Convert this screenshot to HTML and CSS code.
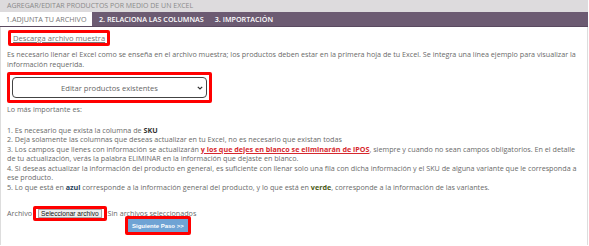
FILE: index.html
```html
<!DOCTYPE html>
<html lang="es">
<head>
    <meta charset="UTF-8">
    <meta name="viewport" content="width=device-width, initial-scale=1.0">
    <title>Agregar/Editar productos por medio de un Excel</title>
    <link rel="stylesheet" href="styles.css">
</head>
<body>
    <div class="page">
        <div class="top-bar">AGREGAR/EDITAR PRODUCTOS POR MEDIO DE UN EXCEL</div>
        <div class="tabs">
            <div class="tab active">1.ADJUNTA TU ARCHIVO</div>
            <div class="tab">2. RELACIONA LAS COLUMNAS</div>
            <div class="tab">3. IMPORTACIÓN</div>
        </div>
        <div class="panel">
            <div class="mark mark-link">
                <a href="#" class="sample-link">Descarga archivo muestra</a>
            </div>
            <p class="intro">Es necesario llenar el Excel como se enseña en el archivo muestra; los productos deben estar en la primera hoja de tu Excel. Se integra una línea ejemplo para visualizar la información requerida.</p>

            <div class="mark mark-select">
                <div class="select-wrap">
                    <select class="mode-select">
                        <option>Editar productos existentes</option>
                    </select>
                    <svg class="chevron" width="6" height="4" viewBox="0 0 6 4"><path d="M0.8 0.8 L3 3 L5.2 0.8" fill="none" stroke="#333" stroke-width="1.2"/></svg>
                </div>
            </div>

            <p class="lead">Lo más importante es:</p>
            <ol class="rules">
                <li>1. Es necesario que exista la columna de <b class="dark">SKU</b></li>
                <li>2. Deja solamente las columnas que deseas actualizar en tu Excel, no es necesario que existan todas</li>
                <li>3. Los campos que llenes con información se actualizarán <span class="warn">y los que dejes en blanco se eliminarán de iPOS</span>, siempre y cuando no sean campos obligatorios. En el detalle de tu actualización, verás la palabra ELIMINAR en la información que dejaste en blanco.</li>
                <li>4. Si deseas actualizar la información del producto en general, es suficiente con llenar solo una fila con dicha información y el SKU de alguna variante que le corresponda a ese producto.</li>
                <li>5. Lo que está en <b class="blue">azul</b> corresponde a la información general del producto, y lo que está en <b class="green">verde</b>, corresponde a la información de las variantes.</li>
            </ol>

            <div class="file-row">
                <span class="file-label">Archivo</span>
                <span class="mark mark-file"><span class="file-btn">Seleccionar archivo</span></span>
                <span class="file-none">Sin archivos seleccionados</span>
            </div>
            <div class="next-row">
                <span class="mark mark-next"><button class="next-btn">Siguiente Paso &gt;&gt;</button></span>
            </div>
        </div>
    </div>
</body>
</html>
```

FILE: styles.css
```css
body {
    margin: 0;
    font-family: "Open Sans", sans-serif;
    background-color: #fff;
    color: #6a6a6a;
}
.page {
    width: 588px;
}
.top-bar {
    height: 12px;
    line-height: 12px;
    padding-left: 7px;
    background-color: #dddbdd;
    color: #8a8a8a;
    font-size: 7px;
}
.tabs {
    display: flex;
    height: 14px;
    background-color: #6c5b72;
    border-bottom: 1px solid #5a4a60;
}
.tab {
    line-height: 14px;
    padding: 0 4px 0 7px;
    font-size: 7.2px;
    color: #fff;
    font-weight: 600;
    white-space: nowrap;
}
.tab.active {
    background-color: #fff;
    color: #777;
    font-weight: 400;
    width: 86px;
    padding: 0 0 0 6px;
}
.panel {
    border-left: 1px solid #ddd;
    border-right: 1px solid #ddd;
    padding: 3px 8px 10px 6px;
    font-size: 7.2px;
    line-height: 9.5px;
}
.mark {
    border: 3px solid #f00;
    border-radius: 2px;
}
.mark-link {
    display: inline-block;
    margin-left: 1px;
    padding: 0 2px;
    line-height: 10px;
}
.sample-link {
    color: #777;
    font-size: 7.6px;
    text-decoration: underline;
}
.intro {
    margin: 4px 0 0 0;
}
.mark-select {
    width: 195px;
    padding: 2px;
    margin-top: 3px;
}
.select-wrap {
    position: relative;
}
.mode-select {
    display: block;
    width: 100%;
    height: 21px;
    appearance: none;
    border: 1px solid #444;
    border-radius: 4px;
    background-color: #fff;
    font-family: "Open Sans", sans-serif;
    font-size: 7.6px;
    color: #666;
    text-align: center;
    text-align-last: center;
}
.chevron {
    position: absolute;
    right: 4px;
    top: 9px;
}
.lead {
    margin: 2px 0 0 0;
}
.rules {
    list-style: none;
    margin: 11px 0 0 0;
    padding: 0;
}
.dark {
    color: #333;
}
.warn {
    color: #d6282e;
    font-weight: 700;
    text-decoration: underline;
}
.blue {
    color: #1f3f5c;
}
.green {
    color: #4a5a16;
}
.file-row {
    display: flex;
    align-items: center;
    margin-top: 14px;
}
.mark-file {
    display: inline-block;
    padding: 0 2px;
    line-height: 9px;
    margin-left: 1px;
}
.file-btn {
    display: inline-block;
    padding: 0 2px;
    background-color: #efefef;
    border: 1px solid #aaa;
    color: #111;
    font-family: "Liberation Sans", sans-serif;
    font-size: 6.6px;
    line-height: 7px;
}
.file-none {
    margin-left: 1px;
}
.next-row {
    margin-top: -5px;
    padding-left: 118px;
}
.mark-next {
    display: inline-block;
    line-height: 0;
}
.next-btn {
    border: none;
    padding: 0 4px;
    height: 13px;
    white-space: nowrap;
    background-color: #6fa3d4;
    color: #fff;
    font-family: "Liberation Sans", sans-serif;
    font-weight: 700;
    font-size: 6px;
    cursor: pointer;
}
```
